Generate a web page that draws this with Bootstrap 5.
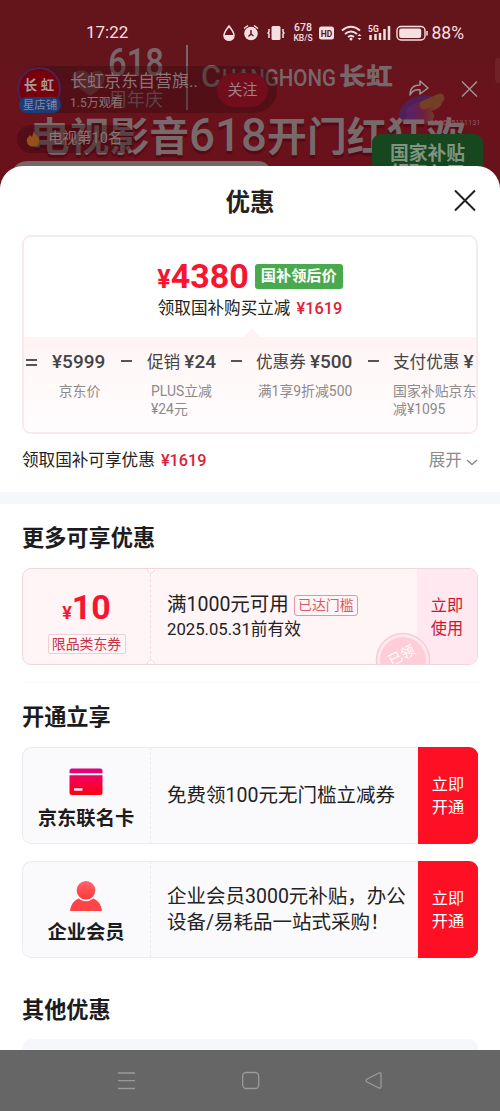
<!DOCTYPE html>
<html lang="zh-CN">
<head>
<meta charset="utf-8">
<meta name="viewport" content="width=device-width, initial-scale=1">
<title>优惠</title>
<link href="https://cdn.jsdelivr.net/npm/bootstrap@5.3.0/dist/css/bootstrap.min.css" rel="stylesheet">
<style>
body{font-family:Roboto,"Noto Sans CJK SC",sans-serif;color:#222;background:#64151c}
.phone{width:500px;height:1111px}
.top-area{height:166px}
.banner{left:0;top:0}
.slogan{text-shadow:0 3px 1px #580916}
.status{height:66px;padding-left:86px;padding-right:36px;color:#f6dfe1;font-size:17px}
.rate{font-size:10.5px;line-height:9.5px;font-weight:500;width:21px}
.live{left:17px;right:21px;top:66px;height:92px;color:#8a7476}
.shop{width:260px;height:47px;background:rgba(45,10,14,.38);border-radius:23px}
.avatar{width:44px;height:44px;left:0;top:1px;border-radius:50%;background:#77000b;border:2px solid #4a2458;font-size:13.5px;line-height:33px;color:#a99a9b;font-weight:700;white-space:nowrap}
.avatar-tag{left:2px;top:31px;width:42px;height:16px;border-radius:8px;background:#1c3c78;color:#7f8ba8;font-size:11.5px;line-height:16px}
.shop-name{left:53px;top:2px;font-size:17px;line-height:26px}
.shop-sub{left:53px;top:28px;font-size:12px;line-height:18px}
.follow{left:200px;top:7px;width:51px;height:34px;border-radius:17px;background:#720d1b;font-size:15px;line-height:34px;color:#9d8184}
.rank{left:0;top:59px;width:118px;height:28px;border-radius:14px;background:rgba(55,10,14,.42);font-size:14.5px;padding-left:9px}
.gov{left:355px;top:68px;width:111px;height:50px;border-radius:9px;background:#17471f;color:#7f957f;font-size:18.8px;line-height:20px;padding-top:10px}
.sheet{background:#fff;border-radius:23px 23px 0 0;overflow:hidden}
.sheet-head{height:69px;font-size:24.5px;font-weight:700;padding-top:5px}
.sheet-close{right:23px;top:23px}
.px22{padding-left:22px;padding-right:22px}
.calc{height:199px;border:2px solid #f8e9ec;border-radius:9px;overflow:hidden}
.calc-top{height:100px;padding-top:22px}
.big{font-size:34px;line-height:34px;font-weight:700;color:#f8152f}
.big span{font-size:25px}
.gb{background:#49a94f;color:#fff;font-weight:700;font-size:15.2px;line-height:25px;width:88px;height:25px;border-radius:3px;margin-left:6px;margin-top:-3px}
.sub16{font-size:16.6px;line-height:24px}
.hot{color:#de2037;font-weight:500;margin-left:2px;font-size:16.3px}
.terms{height:97px;background:linear-gradient(#fff3f4,#fff9fa 45%,#fffcfd);padding:12px 0 0 2px;gap:14px}
.term-h{font-size:16.6px;line-height:26px;color:#444;white-space:nowrap}
.term-h b{font-weight:500;font-size:19px}
.op{width:11px;flex:none;height:26px}
.term-s{font-size:13.9px;line-height:18px;color:#8b8b8b;margin-top:6px;white-space:nowrap}
.t1{width:55px;margin-left:1px}.t2{width:70px;margin-left:1px}.t3{width:98px}.t4{width:90px}
.notch{left:218px;top:91px}
.more-row{height:58px;padding-bottom:4px}
.gray{color:#8b8b8b}
.band{height:12px;background:#f6f7fb}
.h-sec{font-size:22.2px;font-weight:700;line-height:30px;color:#1c1c1e}
.coupon{height:97px;border-radius:9px;border:1px solid #ececf0;background:#fafafc;overflow:hidden}
.coupon.pink{background:#fff4f6;border-color:#f1d6dd}
.coupon.solid-end{border-right:0;background:linear-gradient(#ff0f23,#ff0f23) right/60px 100% no-repeat border-box #fafafc;border-color:transparent;box-shadow:inset 1px 1px #ececf0,inset 0 -1px #ececf0;border:0}
.cp-left{width:128px;border-right:1px dashed #ebebef;flex:none}
.solid-end .cp-left{width:129px;padding-top:1px}
.pink .cp-left{border-color:#f4dbe1}
.cp-mid{padding-left:16px;font-size:19.5px;line-height:26px;white-space:nowrap}
.cp-act{width:60px;flex:none;font-size:16.2px;line-height:23px;color:#fff;background:#ff0f23}
.pink .cp-act{background:#ffe8ef;color:#ca1731}
.cp-name{font-size:19.3px;font-weight:700;line-height:26px;color:#1c1c1e}
.tag-o{border:1px solid #ecd0d7;border-radius:2px;color:#c93247;font-size:13.9px;line-height:18px;width:78px}
.tag-r{border:1px solid #e7949d;border-radius:3px;color:#d75b68;font-size:13.9px;line-height:19px;width:64px;height:21px;margin-left:5px}
.bite{left:121px}
.stamp{left:352px;top:63px}
.rule{height:1px;background:#fafafa}
.peek{height:11px;background:#f6f7fb;border-radius:9px 9px 0 0}
.sysnav{height:61px;background:#666}
</style>
</head>
<body>
<div class="phone position-relative overflow-hidden d-flex flex-column">
  <svg class="banner position-absolute" width="500" height="200" viewBox="0 0 500 200" font-family="Roboto,'Noto Sans CJK SC',sans-serif">
    <defs>
      <linearGradient id="rib" x1="0" x2="1"><stop stop-color="#5a2260"/><stop offset=".5" stop-color="#70203f"/><stop offset="1" stop-color="#754026"/></linearGradient>
      <linearGradient id="bg" x2="0" y2="1"><stop stop-color="#64151c"/><stop offset=".3" stop-color="#64151c"/><stop offset=".45" stop-color="#69131d"/><stop offset="1" stop-color="#69101b"/></linearGradient>
    </defs>
    <path fill="url(#bg)" d="M0 0H500V200H0z"/>
    <path d="M90 96c-8-6-16-10-18-18 1-8 12-11 18-3 5-7 15-5 15 3-1 8-7 13-15 18z" fill="#74383c"/>
    <g fill="#78676a" font-weight="700">
      <text x="108" y="76" font-size="38" textLength="56" lengthAdjust="spacingAndGlyphs" font-weight="500">618</text>
      <text x="109" y="106" font-size="18" textLength="54" font-weight="400">周年庆</text>
      <path d="M186 45h2v65h-2z"/>
      <text x="201" y="87" font-size="31" textLength="20" lengthAdjust="spacingAndGlyphs" font-weight="500">C</text>
      <text x="222" y="86" font-size="24" textLength="114" lengthAdjust="spacingAndGlyphs" font-weight="500">HANGHONG</text>
      <text x="339" y="85" font-size="24" textLength="54" lengthAdjust="spacingAndGlyphs" font-weight="900">长虹</text>
    </g>
    <path d="M438 98c-12-6-32-2-38 12s12 16 26 12" fill="#4f2055"/>
    <path d="M412 112c8-7 17-4 24-10M412 118c6 3 10 1 16-2" fill="none" stroke="url(#rib)" stroke-width="12" stroke-linecap="round"/>
    <path d="M424 105l16-7" stroke="#734026" stroke-width="9" stroke-linecap="round"/>
    <text class="slogan" x="30" y="151" font-size="40" font-weight="700" fill="#78696b" textLength="436" lengthAdjust="spacingAndGlyphs">电视影音<tspan font-size="46" font-weight="500">618</tspan>开门红狂欢</text>
    <path d="M14 168q4-7 14-7h230q8 0 12 7z" fill="#756668"/>
    <text x="430" y="125" font-size="7.5" fill="#8b5960">202505131131</text>
    <rect x="495" y="58" width="8" height="25" rx="4" fill="#702127"/>
  </svg>

  <header class="top-area position-relative flex-shrink-0">
    <div class="status d-flex align-items-center justify-content-between">
      <span>17:22</span>
      <div class="d-flex align-items-center">
        <svg style="margin-right:3px" width="68" height="20" viewBox="0 0 68 20" fill="none" stroke="#f6dfe1" stroke-width="1.5">
          <path d="M7 3C5 6 2 9 2 12.500a5 4.800 0 0 0 10 0C12 9 9 6 7 3z"/><path d="M2.500 12h9c0 3-2 5-4.500 5s-4.500-2-4.500-5z" fill="#f6dfe1" stroke="none"/>
          <circle cx="29" cy="10.500" r="6.800" fill="#f6dfe1" stroke="none"/><path d="M22 5.500l4-3M36 5.500l-4-3"/><path d="M29 7v4l-2.500 2.500M29 11l2.500 2" stroke="#64151c"/>
          <rect x="49.500" y="3" width="9" height="14" rx="1.500" fill="#f6dfe1" stroke="none"/><path d="M47 6v3l-1 1 1 1v4M61 6v3l1 1-1 1v4"/>
        </svg>
        <div class="rate text-center">678<br><span style="font-size:8.5px">KB/S</span></div>
        <svg class="ms-1" width="110" height="20" viewBox="0 0 110 20" fill="none" stroke="#f6dfe1">
          <rect x="1" y="3.500" width="15" height="13" rx="2.500" fill="#f6dfe1" stroke="none"/>
          <text x="2.700" y="13.600" font-size="9.500" font-weight="700" fill="#64151c" stroke="none" textLength="11.500" lengthAdjust="spacingAndGlyphs">HD</text>
          <path d="M24 7.500q9-7.500 18 0M27 11q6-5 12 0M30 14q3-2.500 6 0" stroke-width="2"/><circle cx="33" cy="16" r="1.500" fill="#f6dfe1" stroke="none"/><path d="M39.500 13l2-2 2 2zM39.500 15l2 2 2-2z" fill="#f6dfe1" stroke="none"/>
          <text x="50" y="8.500" font-size="8.500" font-weight="700" fill="#f6dfe1" stroke="none">5G</text>
          <path d="M52.500 12v5M57.500 11v6M62 10v7M66.500 6v11M71 3v14" stroke-width="2.500"/>
          <rect x="79" y="3.500" width="28" height="13.500" rx="4" stroke-width="1.400"/><rect x="81.200" y="5.500" width="22" height="9.500" rx="2" fill="#f6dfe1" stroke="none"/><path d="M109 8v4.500" stroke-width="1.500"/>
        </svg>
        <span style="margin-left:4px;font-size:17.5px">88%</span>
      </div>
    </div>
    <div class="live position-absolute">
      <div class="shop position-relative">
        <div class="avatar position-absolute text-center">长 虹</div>
        <div class="avatar-tag position-absolute text-center">星店铺</div>
        <div class="shop-name position-absolute text-nowrap">长虹京东自营旗..</div>
        <div class="shop-sub position-absolute text-nowrap">1.5万观看</div>
        <div class="follow position-absolute text-center">关注</div>
      </div>
      <svg class="position-absolute" style="left:390px;top:10px" width="72" height="24" viewBox="0 0 72 24" fill="none" stroke="#a19196" stroke-width="1.500">
        <path d="M13 5l8 7-8 6v-4q-7-1-10 5 0-10 10-10z" stroke-linejoin="round"/><path d="M55 5.500l15 15M70 5.500L55 20.500"/>
      </svg>
      <div class="rank position-absolute d-flex align-items-center">
        <svg class="me-2" width="14" height="18" viewBox="0 0 14 18"><path d="M8 1c0 4 6 5 5 11-1 6-11 6-12 0-1-4 2-5 3-7l2 2z" fill="#96501a"/></svg>电视第10名
      </div>
      <div class="gov position-absolute text-center fw-bold">国家补贴<br>领取入口</div>
    </div>
  </header>

  <main class="sheet position-relative flex-grow-1">
    <div class="sheet-head d-flex align-items-center justify-content-center">优惠
      <svg class="sheet-close position-absolute" width="24" height="24" viewBox="0 0 24 24" stroke="#222" stroke-width="2"><path d="M2 1.500l20 20M22 1.500l-20 20"/></svg>
    </div>
    <section class="px22">
      <div class="calc position-relative">
        <div class="calc-top">
          <div class="d-flex justify-content-center align-items-center">
            <div class="big"><span>¥</span>4380</div><div class="gb text-center">国补领后价</div>
          </div>
          <div class="text-center sub16">领取国补购买立减 <span class="hot">¥1619</span></div>
        </div>
        <svg class="notch position-absolute" width="20" height="10" viewBox="0 0 20 10"><path d="M0 10L10 0l10 10z" fill="#fff3f4"/></svg>
        <div class="terms d-flex">
          <svg class="op" viewBox="0 0 11 26" stroke="#555" stroke-width="2"><path d="M0 11h11M0 16h11"/></svg>
          <div class="t1 flex-shrink-0"><div class="term-h"><b>¥5999</b></div><div class="term-s text-center">京东价</div></div>
          <svg class="op" viewBox="0 0 11 26" stroke="#555" stroke-width="2"><path d="M0 12h11"/></svg>
          <div class="t2 flex-shrink-0"><div class="term-h">促销 <b>¥24</b></div><div class="term-s ps-1">PLUS立减<br>¥24元</div></div>
          <svg class="op" viewBox="0 0 11 26" stroke="#555" stroke-width="2"><path d="M0 12h11"/></svg>
          <div class="t3 flex-shrink-0"><div class="term-h">优惠券 <b>¥500</b></div><div class="term-s text-center">满1享9折减500</div></div>
          <svg class="op" viewBox="0 0 11 26" stroke="#555" stroke-width="2"><path d="M0 12h11"/></svg>
          <div class="t4 flex-shrink-0"><div class="term-h">支付优惠 <b>¥</b></div><div class="term-s">国家补贴京东<br>减¥1095</div></div>
        </div>
      </div>
      <div class="more-row d-flex align-items-center justify-content-between sub16">
        <div>领取国补可享优惠 <span class="hot">¥1619</span></div>
        <div class="gray">展开 <svg width="12" height="8" viewBox="0 0 12 8" fill="none" stroke="#8b8b8b" stroke-width="1.500"><path d="M1 2l5 4.500L11 2"/></svg></div>
      </div>
    </section>
    <div class="band"></div>
    <section class="px22">
      <h2 class="h-sec mb-0" style="padding:19px 0 15px">更多可享优惠</h2>
      <div class="coupon pink position-relative d-flex">
        <div class="cp-left d-flex flex-column align-items-center">
          <div class="big" style="margin-top:21px"><span style="font-size:18px">¥</span>10</div>
          <div class="tag-o text-center" style="margin-top:4px">限品类东券</div>
        </div>
        <div class="cp-mid flex-grow-1" style="padding-top:23px">
          <div class="d-flex align-items-center">满1000元可用<span class="tag-r text-center">已达门槛</span></div>
          <div style="font-size:16.7px;line-height:24px">2025.05.31前有效</div>
        </div>
        <svg class="stamp position-absolute" width="56" height="34" viewBox="0 0 56 34"><circle cx="28" cy="28" r="26.500" fill="#ffe8ef" stroke="#f6cdd6" stroke-width="1.500"/><circle cx="28" cy="28" r="23" fill="#ffcdd7"/><text x="28" y="28" transform="rotate(-28 28 26)" text-anchor="middle" font-size="14" fill="#fff">已领</text></svg>
        <div class="cp-act d-flex align-items-center justify-content-center">立即<br>使用</div>
        <svg class="bite position-absolute" style="top:-1px" width="14" height="7" viewBox="0 0 14 7"><path d="M0 0q4 0 4 3 3 4 6 0 0-3 4-3z" fill="#fff" stroke="#f1d6dd"/><path d="M1 0h12" stroke="#fff" stroke-width="2"/></svg>
        <svg class="bite position-absolute" style="bottom:-1px" width="14" height="7" viewBox="0 0 14 7"><path d="M0 7q4 0 4-3 3-4 6 0 0 3 4 3z" fill="#fff" stroke="#f1d6dd"/><path d="M1 7h12" stroke="#fff" stroke-width="2"/></svg>
      </div>
      <div class="rule" style="margin-top:17px"></div>
      <h2 class="h-sec mb-0" style="padding:19px 0 15px">开通立享</h2>
      <div class="coupon solid-end d-flex">
        <div class="cp-left d-flex flex-column align-items-center">
          <svg style="margin-top:20px" width="34" height="28" viewBox="0 0 34 28"><defs><linearGradient id="cg" x2="0" y2="1"><stop stop-color="#e00080"/><stop offset=".3" stop-color="#f00060"/><stop offset="1" stop-color="#ff0010"/></linearGradient></defs><rect x=".5" y=".5" width="33" height="26.500" rx="2.500" fill="url(#cg)"/><path d="M0 6.200h34" stroke="#fafafc" stroke-width="2"/><path d="M5 21.500h8.500" stroke="#ffe6ef" stroke-width="2.500"/></svg>
          <div class="cp-name" style="margin-top:10px">京东联名卡</div>
        </div>
        <div class="cp-mid flex-grow-1 d-flex align-items-center">免费领100元无门槛立减券</div>
        <div class="cp-act d-flex align-items-center justify-content-center">立即<br>开通</div>
      </div>
      <div class="coupon solid-end d-flex" style="margin-top:17px">
        <div class="cp-left d-flex flex-column align-items-center">
          <svg style="margin-top:18px" width="34" height="32" viewBox="0 0 34 32" fill="#ff4448"><defs><linearGradient id="pg" x2="0" y2="1"><stop stop-color="#ff646a"/><stop offset="1" stop-color="#ff373b"/></linearGradient></defs><circle cx="17" cy="10.300" r="9.300" fill="url(#pg)"/><path d="M1 30Q3 21 9.500 18.500q7.500 5.500 15 0Q31 21 33 30q0 1-1 1H2q-1 0-1-1z"/></svg>
          <div class="cp-name" style="margin-top:8px">企业会员</div>
        </div>
        <div class="cp-mid flex-grow-1 d-flex align-items-center">企业会员3000元补贴，办公<br>设备/易耗品一站式采购！</div>
        <div class="cp-act d-flex align-items-center justify-content-center">立即<br>开通</div>
      </div>
      <h2 class="h-sec mb-0" style="padding:37px 0 14px">其他优惠</h2>
      <div class="peek"></div>
    </section>
  </main>

  <nav class="sysnav flex-shrink-0 d-flex justify-content-center align-items-center">
    <svg width="270" height="20" viewBox="0 0 270 20" fill="none" stroke="#9a9a9a" stroke-width="1.300"><path d="M3 2h17M3 9.700h17M3 17.500h17"/><rect x="127.700" y="1.500" width="16" height="16" rx="3.500"/><path d="M266 3v13q0 1.500-2 1l-12-6q-2-1.500 0-3l12-6q2-.5 2 1z"/></svg>
  </nav>
</div>
<script src="https://cdn.jsdelivr.net/npm/bootstrap@5.3.0/dist/js/bootstrap.bundle.min.js"></script>
</body>
</html>
